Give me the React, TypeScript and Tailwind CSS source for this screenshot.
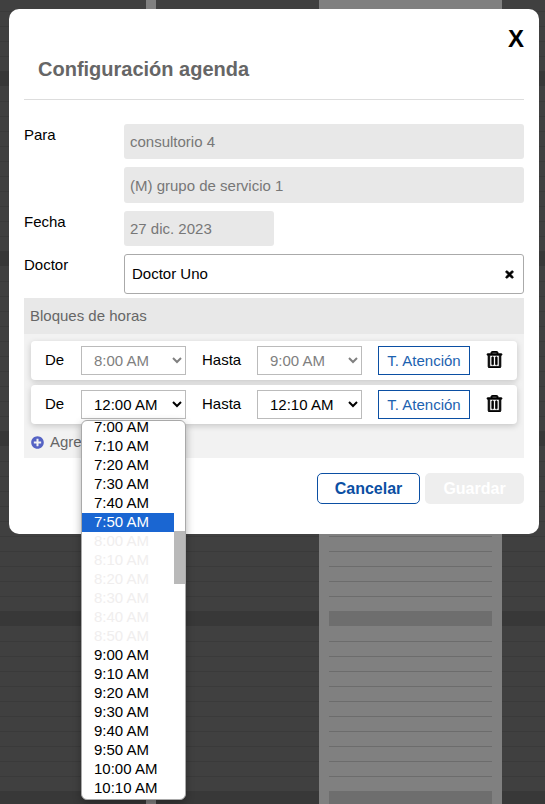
import React from "react";
import { FaPlusCircle, FaRegTrashAlt, FaTimes } from "react-icons/fa";

const rows = Array.from({ length: 53 }, (_, i) => i % 12);

function DarkColumn({ className }: { className: string }) {
  return (
    <div className={`${className} bg-[#404040] pt-[11px]`}>
      {rows.map((r, i) =>
        r === 4 ? (
          <div key={i} className="h-[15px] bg-[#383838]" />
        ) : r === 5 ? (
          <div key={i} className="h-[15px]" />
        ) : (
          <div key={i} className="h-[15px] border-t border-[#3a3a3a]" />
        )
      )}
    </div>
  );
}

function GrayColumn() {
  return (
    <div className="w-[183px] bg-[#808080] px-[10px] pt-[11px]">
      {rows.map((r, i) =>
        r === 4 ? (
          <div key={i} className="h-[15px] bg-[#6e6e6e]" />
        ) : r === 5 ? (
          <div key={i} className="h-[15px]" />
        ) : (
          <div key={i} className="h-[15px] border-t border-[#6c6c6c]" />
        )
      )}
    </div>
  );
}

const Field = ({ className, children }: { className: string; children: React.ReactNode }) => (
  <div className={`${className} flex items-center rounded-[3px] bg-[#e8e8e8] pl-[6px] pt-[2px] text-[#777]`}>{children}</div>
);

function TimeSelect({ value, disabled }: { value: string; disabled?: boolean }) {
  return (
    <select
      disabled={disabled}
      defaultValue={value}
      className={`h-[29px] w-[105px] border border-[#bbb] bg-white pl-[8px] text-[15px] ${disabled ? "text-[#808080]" : "text-black"}`}
    >
      <option>{value}</option>
    </select>
  );
}

function BlockRow({ from, to, disabled }: { from: string; to: string; disabled?: boolean }) {
  return (
    <div className="flex h-[39px] items-center rounded-[4px] bg-white pl-[14px] shadow-[0_2px_6px_rgba(0,0,0,0.18)]">
      <span className="w-[36px]">De</span>
      <TimeSelect value={from} disabled={disabled} />
      <span className="ml-[16px] w-[55px]">Hasta</span>
      <TimeSelect value={to} disabled={disabled} />
      <button className="ml-[16px] h-[29px] w-[92px] border border-[#0b4fa3] pt-[1px] text-[#1c62b0]">T. Atención</button>
      <FaRegTrashAlt className="-mt-[2px] ml-[16px] stroke-[24px] text-[#000]" size={17} />
    </div>
  );
}

const options: [string, "n" | "s" | "d"][] = [
  ["7:00 AM", "n"], ["7:10 AM", "n"], ["7:20 AM", "n"], ["7:30 AM", "n"], ["7:40 AM", "n"], ["7:50 AM", "s"],
  ["8:00 AM", "d"], ["8:10 AM", "d"], ["8:20 AM", "d"], ["8:30 AM", "d"], ["8:40 AM", "d"], ["8:50 AM", "d"],
  ["9:00 AM", "n"], ["9:10 AM", "n"], ["9:20 AM", "n"], ["9:30 AM", "n"], ["9:40 AM", "n"], ["9:50 AM", "n"],
  ["10:00 AM", "n"], ["10:10 AM", "n"],
];

export default function App() {
  return (
    <div className="relative h-[804px] w-[545px] overflow-hidden font-['Liberation_Sans',Arial,sans-serif] text-[15px] text-black">
      <div className="flex h-full">
        <DarkColumn className="w-[146px]" />
        <div className="w-[10px] bg-[#808080]" />
        <DarkColumn className="w-[163px]" />
        <GrayColumn />
        <DarkColumn className="w-[43px]" />
      </div>

      <div className="absolute left-[9px] top-[9px] h-[525px] w-[530px] rounded-[10px] bg-white px-[15px]">
        <div className="flex justify-end pt-[15px] text-[24px] font-bold leading-[30px]">X</div>
        <h2 className="pl-[14px] pt-[3px] text-[20px] font-bold leading-[24px] text-[#666]">Configuración agenda</h2>
        <div className="mt-[18px] h-px bg-[#ddd]" />

        <div className="mt-[24px] flex">
          <div className="w-[100px] leading-[22px]">Para</div>
          <div className="flex-1">
            <Field className="h-[35px]">consultorio 4</Field>
            <Field className="mt-[8px] h-[36px]">(M) grupo de servicio 1</Field>
          </div>
        </div>
        <div className="mt-[8px] flex">
          <div className="w-[100px] leading-[22px]">Fecha</div>
          <Field className="h-[35px] w-[150px]">27 dic. 2023</Field>
        </div>
        <div className="mt-[8px] flex">
          <div className="w-[100px] leading-[22px]">Doctor</div>
          <div className="flex h-[40px] flex-1 items-center justify-between rounded-[3px] border border-[#aaa] pl-[7px] pr-[8px]">
            <span>Doctor Uno</span>
            <FaTimes className="stroke-[40px]" size={11} />
          </div>
        </div>

        <div className="mt-[4px] flex h-[36px] items-center bg-[#e8e8e8] pl-[6px] text-[#666]">Bloques de horas</div>
        <div className="h-[124px] bg-[#f2f2f2] px-[7px] pt-[7px]">
          <BlockRow from="8:00 AM" to="9:00 AM" disabled />
          <div className="mt-[5px]">
            <BlockRow from="12:00 AM" to="12:10 AM" />
          </div>
          <div className="mt-[7px] flex items-center text-[#666]">
            <FaPlusCircle className="text-[#5563c4]" size={13} />
            <span className="ml-[6px]">Agregar</span>
          </div>
        </div>

        <div className="mt-[15px] flex justify-end gap-[5px]">
          <button className="h-[31px] w-[103px] rounded-[5px] border border-[#0b4fa3] text-[16px] font-bold text-[#0b4fa3]">Cancelar</button>
          <button className="h-[31px] w-[99px] rounded-[5px] bg-[#eeeeee] text-[16px] font-bold text-white">Guardar</button>
        </div>
      </div>

      <div className="absolute left-[81px] top-[420px] flex h-[380px] w-[105px] overflow-hidden rounded-[6px] border border-[#a9a9a9] bg-white shadow-[0_3px_8px_rgba(0,0,0,0.3)]">
        <div className="-mt-[3px] w-[92px]">
          {options.map(([label, kind]) => (
            <div
              key={label}
              className={`h-[19px] pl-[12px] leading-[17px] ${kind === "s" ? "bg-[#1a66d2] text-white" : kind === "d" ? "text-[#f0eeee]" : "text-black"}`}
            >
              {label}
            </div>
          ))}
        </div>
        <div className="flex-1 pt-[110px]">
          <div className="h-[53px] bg-[#b9b9b9]" />
        </div>
      </div>
    </div>
  );
}
